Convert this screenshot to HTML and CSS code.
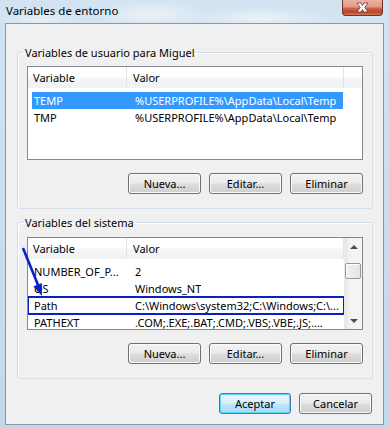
FILE: index.html
```html
<!DOCTYPE html>
<html lang="es">
<head>
  <meta charset="UTF-8">
  <meta name="viewport" content="width=device-width, initial-scale=1.0">
  <title>Variables de entorno</title>
  <link rel="stylesheet" href="styles.css">
</head>
<body>
<div class="window">
  <!-- Title bar -->
  <div class="titlebar">
    <span class="title">Variables de entorno</span>
    <div class="close-btn">
      <svg width="17" height="11" viewBox="0 0 17 11">
        <path d="M3 1 L7 1 L8.5 3.5 L10 1 L14 1 L10.8 5.5 L14 10 L10 10 L8.5 7.5 L7 10 L3 10 L6.2 5.5 Z" fill="#fff" stroke="#5a3a34" stroke-width="0.8"/>
      </svg>
    </div>
  </div>

  <div class="panel">
    <!-- User variables -->
    <fieldset class="group group-user">
      <legend>Variables de usuario para Miguel</legend>
      <div class="listview list-user">
        <div class="lv-header">
          <div class="lv-col col-name">Variable</div>
          <div class="lv-col col-value">Valor</div>
          <div class="lv-col col-fill"></div>
        </div>
        <div class="lv-rows">
          <div class="lv-row selected">
            <div class="cell-name">TEMP</div>
            <div class="cell-value">%USERPROFILE%\AppData\Local\Temp</div>
          </div>
          <div class="lv-row">
            <div class="cell-name">TMP</div>
            <div class="cell-value">%USERPROFILE%\AppData\Local\Temp</div>
          </div>
        </div>
      </div>
      <div class="button-row">
        <button>Nueva...</button>
        <button>Editar...</button>
        <button>Eliminar</button>
      </div>
    </fieldset>

    <!-- System variables -->
    <fieldset class="group group-system">
      <legend>Variables del sistema</legend>
      <div class="listview list-system">
        <div class="lv-main">
          <div class="lv-header">
            <div class="lv-col col-name">Variable</div>
            <div class="lv-col col-value">Valor</div>
          </div>
          <div class="lv-rows">
            <div class="lv-row">
              <div class="cell-name">NUMBER_OF_P...</div>
              <div class="cell-value">2</div>
            </div>
            <div class="lv-row">
              <div class="cell-name">OS</div>
              <div class="cell-value">Windows_NT</div>
            </div>
            <div class="lv-row marked">
              <div class="cell-name">Path</div>
              <div class="cell-value">C:\Windows\system32;C:\Windows;C:\...</div>
            </div>
            <div class="lv-row">
              <div class="cell-name">PATHEXT</div>
              <div class="cell-value">.COM;.EXE;.BAT;.CMD;.VBS;.VBE;.JS;....</div>
            </div>
          </div>
        </div>
        <div class="scrollbar">
          <div class="sb-arrow up"></div>
          <div class="sb-track">
            <div class="sb-thumb"></div>
          </div>
          <div class="sb-arrow down"></div>
        </div>
      </div>
      <div class="button-row">
        <button>Nueva...</button>
        <button>Editar...</button>
        <button>Eliminar</button>
      </div>
    </fieldset>

    <div class="dialog-buttons">
      <button class="default">Aceptar</button>
      <button>Cancelar</button>
    </div>
  </div>
</div>

<!-- Annotation arrow -->
<svg class="annotation" width="60" height="60" viewBox="0 0 60 60">
  <line x1="3" y1="8" x2="18" y2="45" stroke="#0b1fc9" stroke-width="2.6"/>
  <polygon points="22,56 13.4,46.5 21.8,43.1" fill="#0b1fc9"/>
</svg>
</body>
</html>
```

FILE: styles.css
```css
body {
    margin: 0;
    width: 389px;
    height: 427px;
    overflow: hidden;
    font-family: "Noto Sans", "Open Sans", sans-serif;
    font-size: 11px;
    color: #000;
    background-color: #c9dcec;
    background-image:
        radial-gradient(ellipse 60px 14px at 150px 14px, rgba(255,255,255,0.55), transparent),
        radial-gradient(ellipse 80px 12px at 260px 18px, rgba(255,255,255,0.5), transparent),
        radial-gradient(ellipse 40px 10px at 40px 20px, rgba(255,255,255,0.45), transparent),
        linear-gradient(#d3e3f1, #c3d8ea);
    position: relative;
}
.window {
    display: flex;
    flex-direction: column;
    height: 427px;
}
.titlebar {
    height: 23px;
    display: flex;
    justify-content: space-between;
    align-items: flex-start;
}
.title {
    margin: 3px 0 0 6px;
    line-height: 16px;
    font-size: 11.5px;
}
.close-btn {
    width: 39px;
    height: 15px;
    margin-right: 6px;
    border: 1px solid #6f3327;
    border-top: none;
    border-radius: 0 0 4px 4px;
    background: linear-gradient(#ebb2a4 0%, #e59a88 45%, #cf6448 55%, #b9442a 80%, #d3775d 100%);
    display: flex;
    justify-content: center;
    align-items: center;
}
.panel {
    flex: 1;
    margin: 0 5px 2px 5px;
    border: 1px solid #8b98a4;
    background-color: #f0f0f0;
    display: flex;
    flex-direction: column;
}
.group {
    margin: 21px 10px 0 11px;
    padding: 6px 9px 14px 9px;
    border: 1px solid #d5dfe5;
    border-radius: 3px;
    box-shadow: inset 1px 1px 0 #fff;
}
.group-system {
    margin-top: 6px;
    padding-top: 7px;
}
legend {
    padding: 0 2px;
    margin-left: -4px;
    line-height: 15px;
}
.listview {
    border: 1px solid #828790;
    background-color: #fff;
    overflow: hidden;
}
.list-user {
    height: 92px;
}
.list-system {
    height: 91px;
    display: flex;
}
.lv-main {
    flex: 1;
    min-width: 0;
}
.lv-header {
    display: flex;
    height: 21px;
    margin-bottom: 4px;
    background: linear-gradient(#fff 0%, #fff 45%, #f4f5f7 55%, #f1f2f4 100%);
}
.lv-col {
    line-height: 21px;
    border-right: 1px solid #e3e5e8;
    white-space: nowrap;
}
.col-name {
    width: 93px;
    padding-left: 5px;
}
.col-value {
    width: 210px;
    padding-left: 6px;
}
.col-fill {
    flex: 1;
    border-right: none;
}
.list-system .col-value {
    flex: 1;
}
.lv-row {
    display: flex;
    height: 17px;
    line-height: 17px;
    margin-left: 4px;
    width: 311px;
    white-space: nowrap;
}
.lv-row.selected {
    background-color: #3399ff;
    color: #fff;
}
.lv-row.marked {
    margin-left: 0;
    padding-left: 4px;
    width: 312px;
    outline: 2px solid #0b1fc9;
    outline-offset: -1px;
}
.cell-name {
    width: 92px;
    padding-left: 2px;
    overflow: hidden;
}
.cell-value {
    padding-left: 9px;
    overflow: hidden;
}
.scrollbar {
    width: 17px;
    display: flex;
    flex-direction: column;
    background: linear-gradient(90deg, #e6e6e6, #f4f4f4 30%, #f4f4f4);
    border-left: 1px solid #ececec;
}
.sb-arrow {
    height: 17px;
    display: flex;
    justify-content: center;
    align-items: center;
}
.sb-arrow::before {
    content: "";
    border-left: 4px solid transparent;
    border-right: 4px solid transparent;
}
.sb-arrow.up::before {
    border-bottom: 4px solid #4d4d4d;
}
.sb-arrow.down::before {
    border-top: 4px solid #4d4d4d;
}
.sb-track {
    flex: 1;
}
.sb-thumb {
    height: 14px;
    margin: 8px 1px 0 0;
    border: 1px solid #979797;
    border-radius: 2px;
    background: linear-gradient(90deg, #f3f3f3, #e4e4e4);
    box-shadow: inset 1px 1px 0 #fff;
}
.button-row {
    display: flex;
    justify-content: flex-end;
    gap: 8px;
    margin-top: 13px;
}
button {
    width: 73px;
    height: 21px;
    padding: 0;
    font-family: inherit;
    font-size: 11px;
    color: #000;
    border: 1px solid #707070;
    border-radius: 3px;
    background: linear-gradient(#f2f2f2 0%, #ebebeb 48%, #dddddd 52%, #cfcfcf 100%);
    box-shadow: inset 0 0 0 1px #fbfbfb;
}
button.default {
    width: 72px;
    border-color: #3c7fb1;
    background: linear-gradient(#eaf6fd 0%, #d9f0fc 48%, #bee6fd 52%, #a7d9f5 100%);
    box-shadow: inset 0 0 0 1px #5ed0f6;
}
.dialog-buttons {
    display: flex;
    justify-content: flex-end;
    gap: 8px;
    margin: 14px 11px 0 0;
}
.annotation {
    position: absolute;
    left: 20px;
    top: 240px;
}
```
